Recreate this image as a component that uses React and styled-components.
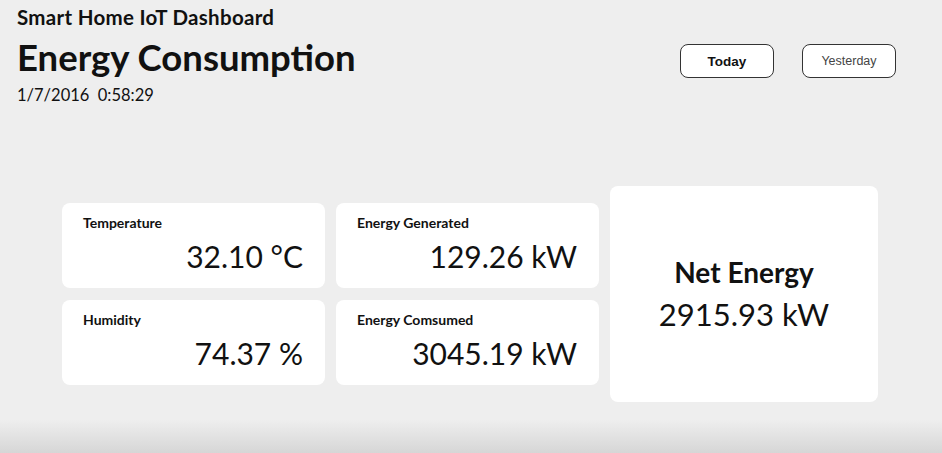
import styled, { createGlobalStyle } from "styled-components";

const GlobalStyle = createGlobalStyle`
    html, body {
        margin: 0;
        padding: 0;
        height: 100%;
    }
    body {
        background: #eeeeee;
        font-family: Lato, "Noto Sans", sans-serif;
        color: #111;
    }
`;

const sensors = [
    [
        { label: "Temperature", value: "32.10 °C" },
        { label: "Humidity", value: "74.37 %" },
    ],
    [
        { label: "Energy Generated", value: "129.26 kW" },
        { label: "Energy Comsumed", value: "3045.19 kW" },
    ],
];

const App = () => {
    return (
        <Page>
            <GlobalStyle />
            <Header>
                <div>
                    <AppName>Smart Home IoT Dashboard</AppName>
                    <Title>Energy Consumption</Title>
                    <Stamp>1/7/2016&nbsp;&nbsp;0:58:29</Stamp>
                </div>
                <Buttons>
                    <DayButton $active>Today</DayButton>
                    <DayButton>Yesterday</DayButton>
                </Buttons>
            </Header>
            <Board>
                {sensors.map((col, i) => (
                    <Column key={i}>
                        {col.map((s) => (
                            <Card key={s.label}>
                                <Label>{s.label}</Label>
                                <Value>{s.value}</Value>
                            </Card>
                        ))}
                    </Column>
                ))}
                <NetCard>
                    <NetTitle>Net Energy</NetTitle>
                    <NetValue>2915.93 kW</NetValue>
                </NetCard>
            </Board>
        </Page>
    );
};

export default App;

const Page = styled.div`
    width: 942px;
    height: 453px;
    overflow: hidden;
    background: linear-gradient(to bottom, #eeeeee 0, #eeeeee 420px, #d6d6d6 453px);
`;

const Header = styled.div`
    display: flex;
    justify-content: space-between;
    align-items: flex-start;
    height: 106px;
    box-sizing: border-box;
    padding: 5px 46px 0 17px;
`;

const AppName = styled.h3`
    margin: 0;
    font-size: 20.5px;
    font-weight: 700;
    letter-spacing: 0.3px;
    line-height: 24px;
`;

const Title = styled.h1`
    margin: 7px 0 0;
    font-size: 36.5px;
    font-weight: 700;
    line-height: 42px;
`;

const Stamp = styled.p`
    margin: 7px 0 0;
    font-size: 16.5px;
    line-height: 20px;
`;

const Buttons = styled.div`
    display: flex;
    gap: 28px;
    margin-top: 39px;
`;

const DayButton = styled.button`
    width: 94px;
    height: 34px;
    background: #fff;
    border: 1.5px solid #333;
    border-radius: 8px;
    font-family: "Liberation Sans", Arial, sans-serif;
    font-size: ${(p) => (p.$active ? "13.5px" : "12.5px")};
    font-weight: ${(p) => (p.$active ? 700 : 400)};
    color: ${(p) => (p.$active ? "#111" : "#444")};
    padding: 0;
`;

const Board = styled.div`
    display: flex;
    align-items: center;
    gap: 11px;
    padding: 80px 0 0 62px;
`;

const Column = styled.div`
    display: flex;
    flex-direction: column;
    gap: 12px;
`;

const Card = styled.div`
    width: 263px;
    height: 85px;
    box-sizing: border-box;
    background: #fff;
    border-radius: 8px;
    padding: 11px 22px 0 21px;
    display: flex;
    flex-direction: column;
`;

const Label = styled.span`
    font-size: 14px;
    font-weight: 700;
    line-height: 18px;
`;

const Value = styled.span`
    align-self: flex-end;
    font-size: 30px;
    font-weight: 400;
    line-height: 38px;
    margin-top: 5px;
`;

const NetCard = styled.div`
    width: 268px;
    height: 216px;
    box-sizing: border-box;
    padding-top: 69px;
    background: #fff;
    border-radius: 8px;
    display: flex;
    flex-direction: column;
    align-items: center;
`;

const NetTitle = styled.span`
    font-size: 28px;
    font-weight: 700;
    line-height: 34px;
`;

const NetValue = styled.span`
    font-size: 31px;
    font-weight: 400;
    line-height: 36px;
    margin-top: 7px;
`;
